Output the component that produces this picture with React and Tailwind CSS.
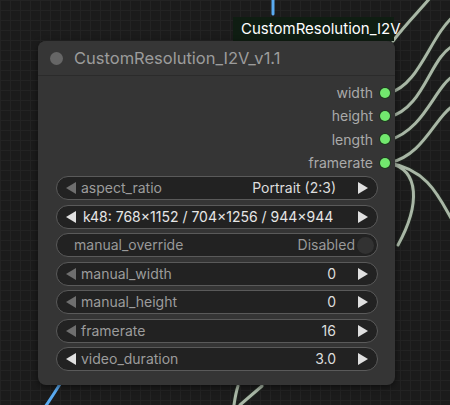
import React from 'react';

const outputs = ['width', 'height', 'length', 'framerate'];

const widgets = [
  { label: 'aspect_ratio', value: 'Portrait (2:3)', left: false },
  { label: null, value: 'k48: 768×1152 / 704×1256 / 944×944', left: true },
  { label: 'manual_override', value: 'Disabled', toggle: true },
  { label: 'manual_width', value: '0', left: false },
  { label: 'manual_height', value: '0', left: false },
  { label: 'framerate', value: '16', left: false },
  { label: 'video_duration', value: '3.0', left: true },
];

const Arrow = ({ dir, active }) => (
  <svg width="10" height="12" viewBox="0 0 10 12" className="shrink-0">
    <polygon
      points={dir === 'left' ? '10,0 10,12 0,6' : '0,0 0,12 10,6'}
      fill={active ? '#e0e0e0' : '#6f6f6f'}
    />
  </svg>
);

const Widget = ({ label, value, left, toggle }) => (
  <div className="h-[24px] rounded-full bg-[#222222] border border-[#5a5a5a] flex items-center text-[14px] leading-none">
    {toggle ? (
      <>
        <span className="pl-[17px] text-[#999999]">{label}</span>
        <span className="ml-auto text-[#999999]">{value}</span>
        <span className="w-[17px] h-[17px] rounded-full bg-[#323232] ml-[2px] mr-[3px]" />
      </>
    ) : (
      <>
        <span className="pl-[9px] pr-[5px]">
          <Arrow dir="left" active={left} />
        </span>
        {label ? (
          <>
            <span className="text-[#9c9c9c]">{label}</span>
            <span className="ml-auto text-[#dddddd]">{value}</span>
          </>
        ) : (
          <span className="text-[#e6e6e6] pl-[2px]">{value}</span>
        )}
        <span className={`${label ? 'pl-[22px]' : 'ml-auto'} pr-[9px]`}>
          <Arrow dir="right" active />
        </span>
      </>
    )}
  </div>
);

const links = [
  'M389 93 C420 85, 430 35, 455 15',
  'M389 117 C425 108, 430 55, 455 45',
  'M389 140 C425 130, 435 85, 455 75',
  'M389 163 C425 155, 435 115, 455 105',
  'M389 163 C420 170, 420 205, 398 245',
  'M389 163 C430 170, 440 200, 455 225',
  'M393 41 C405 25, 420 10, 430 -2',
  'M234 405 C235 398, 236 392, 238 386',
  'M240 405 C248 398, 255 392, 262 386',
];

const Wires = () => (
  <svg className="absolute inset-0" width="450" height="405" viewBox="0 0 450 405">
    <g fill="none" strokeLinecap="round">
      <g stroke="#202620" strokeWidth="5">
        {links.map((d, i) => <path key={i} d={d} />)}
      </g>
      <g stroke="#a9b7a6" strokeWidth="3">
        {links.map((d, i) => <path key={i} d={d} />)}
      </g>
      {/* image input link */}
      <g stroke="#5aabf2" strokeWidth="3">
        <path d="M273 -2 L273 14" />
        <path d="M267 38 L267 42" />
        <path d="M45 407 C50 400, 55 392, 60 384" />
      </g>
    </g>
  </svg>
);

export default function App() {
  return (
    <div
      className="relative w-[450px] h-[405px] overflow-hidden bg-[#1b1b1b] bg-[linear-gradient(#232323_1px,transparent_1px),linear-gradient(90deg,#232323_1px,transparent_1px)] bg-[size:10px_10px]"
      style={{ fontFamily: 'Inter, "Noto Sans", sans-serif' }}
    >
      <Wires />

      {/* group title */}
      <div className="absolute left-[233px] top-[17px] h-[24px] w-[161px] bg-[#0f1d12] text-white text-[15px] flex items-center pl-[8px]">
        CustomResolution_I2V
      </div>

      {/* node */}
      <div className="absolute left-[38px] top-[41px] w-[357px] h-[344px] rounded-[8px] bg-[#353535] shadow-[0_2px_6px_rgba(0,0,0,0.5)] flex flex-col">
        <div className="h-[35px] shrink-0 flex items-center border-b border-[#2b2b2b] bg-[#363636] rounded-t-[8px]">
          <span className="w-[13px] h-[13px] rounded-full bg-[#666666] ml-[12px]" />
          <span className="ml-[11px] text-[16.5px] text-[#9c9c9c]">CustomResolution_I2V_v1.1</span>
        </div>

        <div className="pt-[5px] flex flex-col">
          {outputs.map((name) => (
            <div key={name} className="h-[23.3px] flex items-center justify-end text-[14px] text-[#aaaaaa]">
              <span>{name}</span>
              <span className="w-[10px] h-[10px] rounded-full bg-[#72e86e] ml-[7px] mr-[5px] shadow-[0_0_0_1px_#1f3a1f]" />
            </div>
          ))}
        </div>

        <div className="mt-[2px] pl-[18px] pr-[17px] flex flex-col gap-[4.5px]">
          {widgets.map((w, i) => (
            <Widget key={i} {...w} />
          ))}
        </div>
      </div>
    </div>
  );
}
